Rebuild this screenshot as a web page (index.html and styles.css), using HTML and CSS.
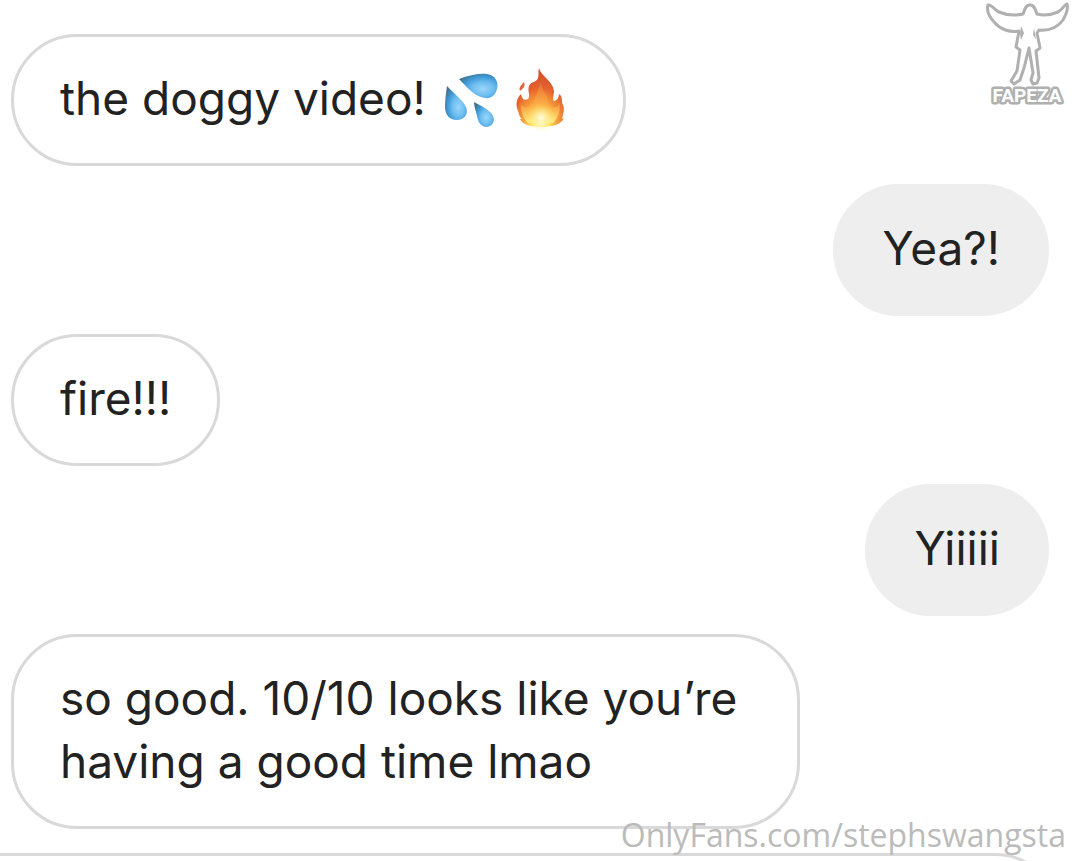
FILE: index.html
```html
<!DOCTYPE html>
<html lang="en">
<head>
    <meta charset="UTF-8">
    <meta name="viewport" content="width=device-width, initial-scale=1.0">
    <title>Messages</title>
    <link rel="stylesheet" href="styles.css">
</head>
<body>
    <main class="chat">
        <div class="message received">
            <p>the doggy video!</p>
            <div class="emojis">
                <svg viewBox="0 0 60 64" role="img" aria-label="Sweat droplets">
                    <defs>
                        <radialGradient id="drop" cx="0.62" cy="0.62" r="0.7">
                            <stop offset="0" stop-color="#9ad6fb"/>
                            <stop offset="0.4" stop-color="#6dbdf0"/>
                            <stop offset="0.7" stop-color="#3f9bd8"/>
                            <stop offset="1" stop-color="#41748f"/>
                        </radialGradient>
                    </defs>
                    <path fill="url(#drop)" d="M16 12C26 8 37 6 44 7C52 8 56 15 54 22C52 30 46 33 38 30C29 27 23 19 16 12Z"/>
                    <path fill="url(#drop)" d="M4 19C10 26 19 32 23 40C26 47 21 53 14 53C6 53 2 47 2 40C2 33 3 26 4 19Z"/>
                    <path fill="url(#drop)" d="M31 35C38 39 47 43 50 49C53 55 48 60 43 60C37 59 35 54 34 49C33 44 31 40 31 35Z"/>
                </svg>
                <svg viewBox="0 0 60 64" role="img" aria-label="Fire">
                    <defs>
                        <radialGradient id="flame" cx="0.5" cy="0.92" r="0.9">
                            <stop offset="0" stop-color="#fffbd0"/>
                            <stop offset="0.2" stop-color="#ffe45e"/>
                            <stop offset="0.42" stop-color="#f79a3a"/>
                            <stop offset="0.65" stop-color="#e4632f"/>
                            <stop offset="1" stop-color="#cf4b2b"/>
                        </radialGradient>
                        <linearGradient id="core" x1="0" y1="0" x2="0" y2="1">
                            <stop offset="0" stop-color="#f08a3c" stop-opacity="0.5"/>
                            <stop offset="0.6" stop-color="#fdb047" stop-opacity="0.7"/>
                            <stop offset="1" stop-color="#ffee80"/>
                        </linearGradient>
                        <radialGradient id="glow">
                            <stop offset="0" stop-color="#fffde0"/>
                            <stop offset="1" stop-color="#ffee80" stop-opacity="0"/>
                        </radialGradient>
                    </defs>
                    <path fill="url(#flame)" d="M28 1C29 8 42 14 43 24C43 29 41 32 43 34C46 34 48 30 48 27C52 29 50 34 52 38C54 43 52 47 51 52L53 51C50 58 40 60 30 60C20 60 12 58 9 52L11 52C8 49 8 47 7 44C4 37 6 31 10 27C11 32 13 34 17 32C20 29 16 24 18 19C20 14 25 16 27 11C28 8 27 4 28 1Z"/>
                    <path fill="url(#core)" d="M30 15C30 23 37 28 37 35C38 40 41 42 45 40C48 39 48 37 48 35C50 44 47 51 42 56L17 56C11 50 10 43 10 37C13 42 19 41 22 36C25 30 27 23 30 15Z"/>
                    <circle cx="30" cy="51" r="14" fill="url(#glow)"/>
                    <path fill="#dc673f" d="M13 15C15 20 11 22 9 24C7 20 11 18 13 15Z"/>
                </svg>
            </div>
        </div>
        <div class="message sent">
            <p>Yea?!</p>
        </div>
        <div class="message received">
            <p>fire!!!</p>
        </div>
        <div class="message sent">
            <p>Yiiiii</p>
        </div>
        <div class="message received">
            <p>so good. 10/10 looks like you’re having a good time lmao</p>
        </div>
        <div class="next-message"></div>
    </main>

    <div class="logo">
        <svg viewBox="0 0 100 110" role="img" aria-label="Fapeza">
            <path fill="#fff" stroke="#b0b0b0" stroke-width="3" stroke-linejoin="round" d="M51 14C53 10 53 5 58 5C63 5 63 10 65 14C72 16 79 15 86 12C91 9 92 5 95 4C97 10 93 16 91 20C86 27 78 31 67 30L65 33L68 48L64 51L67 78L65 83L61 84L59 80L61 73L57 48L52 68L48 80L42 84L39 81L45 71L48 50L44 47L47 31C38 33 28 29 23 23C18 18 14 12 16 5C20 4 22 10 27 12C34 15 42 16 51 14Z"/>
            <path fill="#b0b0b0" d="M49 26L52 33L49 40L48 34ZM62 28L64 39L61 35Z"/>
            <text x="55" y="102">FAPEZA</text>
        </svg>
    </div>
    <a class="profile-link" href="#">OnlyFans.com/stephswangsta</a>
</body>
</html>
```
FILE: styles.css
```css
* {
    box-sizing: border-box;
}
body {
    margin: 0;
    background-color: #fff;
    color: #222;
    font-family: Inter, "Liberation Sans", sans-serif;
}
.chat {
    display: flex;
    flex-direction: column;
    gap: 18px;
    height: 100vh;
    padding: 34px 23px 0 11px;
    overflow: hidden;
}
.message {
    display: flex;
    flex-shrink: 0;
    align-items: center;
    gap: 17px;
    max-width: 76%;
    padding: 30px 46px 33px;
    border: 3px solid #d9d9d9;
    border-radius: 66px;
    font-size: 46px;
    line-height: 63px;
}
.message p {
    margin: 0;
}
.received {
    align-self: flex-start;
}
.sent {
    align-self: flex-end;
    border-color: #eee;
    background-color: #eee;
}
.emojis {
    display: flex;
    gap: 8px;
    margin: 0 6px -1px 0;
}
.emojis svg {
    width: 60px;
    height: 64px;
}
/* top edge of the message that continues below the fold */
.next-message {
    flex-shrink: 0;
    height: 132px;
    margin: 6px -12px 0 -80px;
    border: 3px solid #d9d9d9;
    border-radius: 66px;
}
.logo {
    position: absolute;
    top: 0;
    right: 0;
    width: 100px;
}
.logo svg {
    display: block;
}
.logo text {
    fill: #fff;
    stroke: #b0b0b0;
    stroke-width: 5px;
    stroke-linejoin: round;
    paint-order: stroke;
    font-family: Roboto, "Liberation Sans", sans-serif;
    font-size: 19px;
    font-weight: bold;
    text-anchor: middle;
}
.profile-link {
    position: absolute;
    right: 6px;
    bottom: 2px;
    color: #bbb;
    font-family: "Open Sans", sans-serif;
    font-size: 32px;
    line-height: 48px;
    text-decoration: none;
}
```
